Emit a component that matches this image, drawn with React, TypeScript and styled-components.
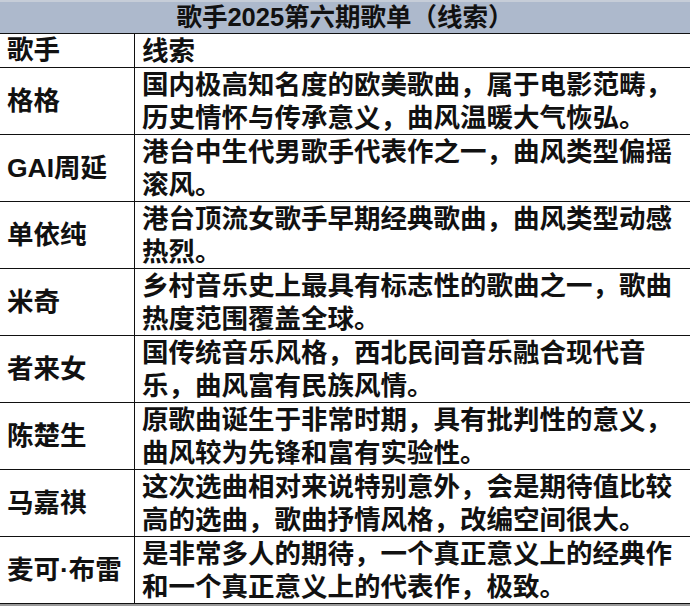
import React from "react";
import styled, { createGlobalStyle } from "styled-components";

const Global = createGlobalStyle`
  html, body { margin: 0; padding: 0; background: #ffffff; }
  body { font-family: "Liberation Sans", "Noto Sans CJK SC", sans-serif; color: #111; }
`;

const Sheet = styled.div`
  width: 690px;
  height: 606px;
  overflow: hidden;
  background: #fff;
  border-bottom: 2px solid #9a9a9a;
  box-sizing: border-box;
`;

const Title = styled.div`
  height: 34px;
  box-sizing: border-box;
  background: #adb9cc;
  border-top: 2px solid #c6cdd8;
  border-bottom: 1px solid #111;
  display: flex;
  align-items: center;
  justify-content: center;
  font-size: 25.5px;
  font-weight: 700;
  line-height: 1;
`;

const Row = styled.div<{ $h: number }>`
  display: grid;
  grid-template-columns: 135px 1fr;
  height: ${(p) => p.$h}px;
  box-sizing: border-box;
  border-bottom: 1px solid #111;
`;

const NameCell = styled.div`
  border-right: 1px solid #111;
  display: flex;
  align-items: center;
  padding-left: 7px;
  font-size: 26.5px;
  font-weight: 700;
  white-space: nowrap;
  line-height: 1;
`;

const ClueCell = styled.div`
  padding: 2px 0 0 7px;
  font-size: 26.5px;
  font-weight: 700;
  white-space: nowrap;
  display: flex;
  flex-direction: column;
  justify-content: center;
  gap: 6px;
  line-height: 1;
`;

const Line = styled.span`
  display: block;
  height: 27px;
`;

const rows: { name: string; lines: string[] }[] = [
  { name: "格格", lines: ["国内极高知名度的欧美歌曲，属于电影范畴，", "历史情怀与传承意义，曲风温暖大气恢弘。"] },
  { name: "GAI周延", lines: ["港台中生代男歌手代表作之一，曲风类型偏摇", "滚风。"] },
  { name: "单依纯", lines: ["港台顶流女歌手早期经典歌曲，曲风类型动感", "热烈。"] },
  { name: "米奇", lines: ["乡村音乐史上最具有标志性的歌曲之一，歌曲", "热度范围覆盖全球。"] },
  { name: "者来女", lines: ["国传统音乐风格，西北民间音乐融合现代音", "乐，曲风富有民族风情。"] },
  { name: "陈楚生", lines: ["原歌曲诞生于非常时期，具有批判性的意义，", "曲风较为先锋和富有实验性。"] },
  { name: "马嘉祺", lines: ["这次选曲相对来说特别意外，会是期待值比较", "高的选曲，歌曲抒情风格，改编空间很大。"] },
  { name: "麦可·布雷", lines: ["是非常多人的期待，一个真正意义上的经典作", "和一个真正意义上的代表作，极致。"] },
];

export default function App() {
  return (
    <>
      <Global />
      <Sheet>
        <Title>歌手2025第六期歌单（线索）</Title>
        <Row $h={34}>
          <NameCell>歌手</NameCell>
          <ClueCell>线索</ClueCell>
        </Row>
        {rows.map((r) => (
          <Row key={r.name} $h={67}>
            <NameCell>{r.name}</NameCell>
            <ClueCell>
              {r.lines.map((l, i) => (
                <Line key={i}>{l}</Line>
              ))}
            </ClueCell>
          </Row>
        ))}
      </Sheet>
    </>
  );
}
